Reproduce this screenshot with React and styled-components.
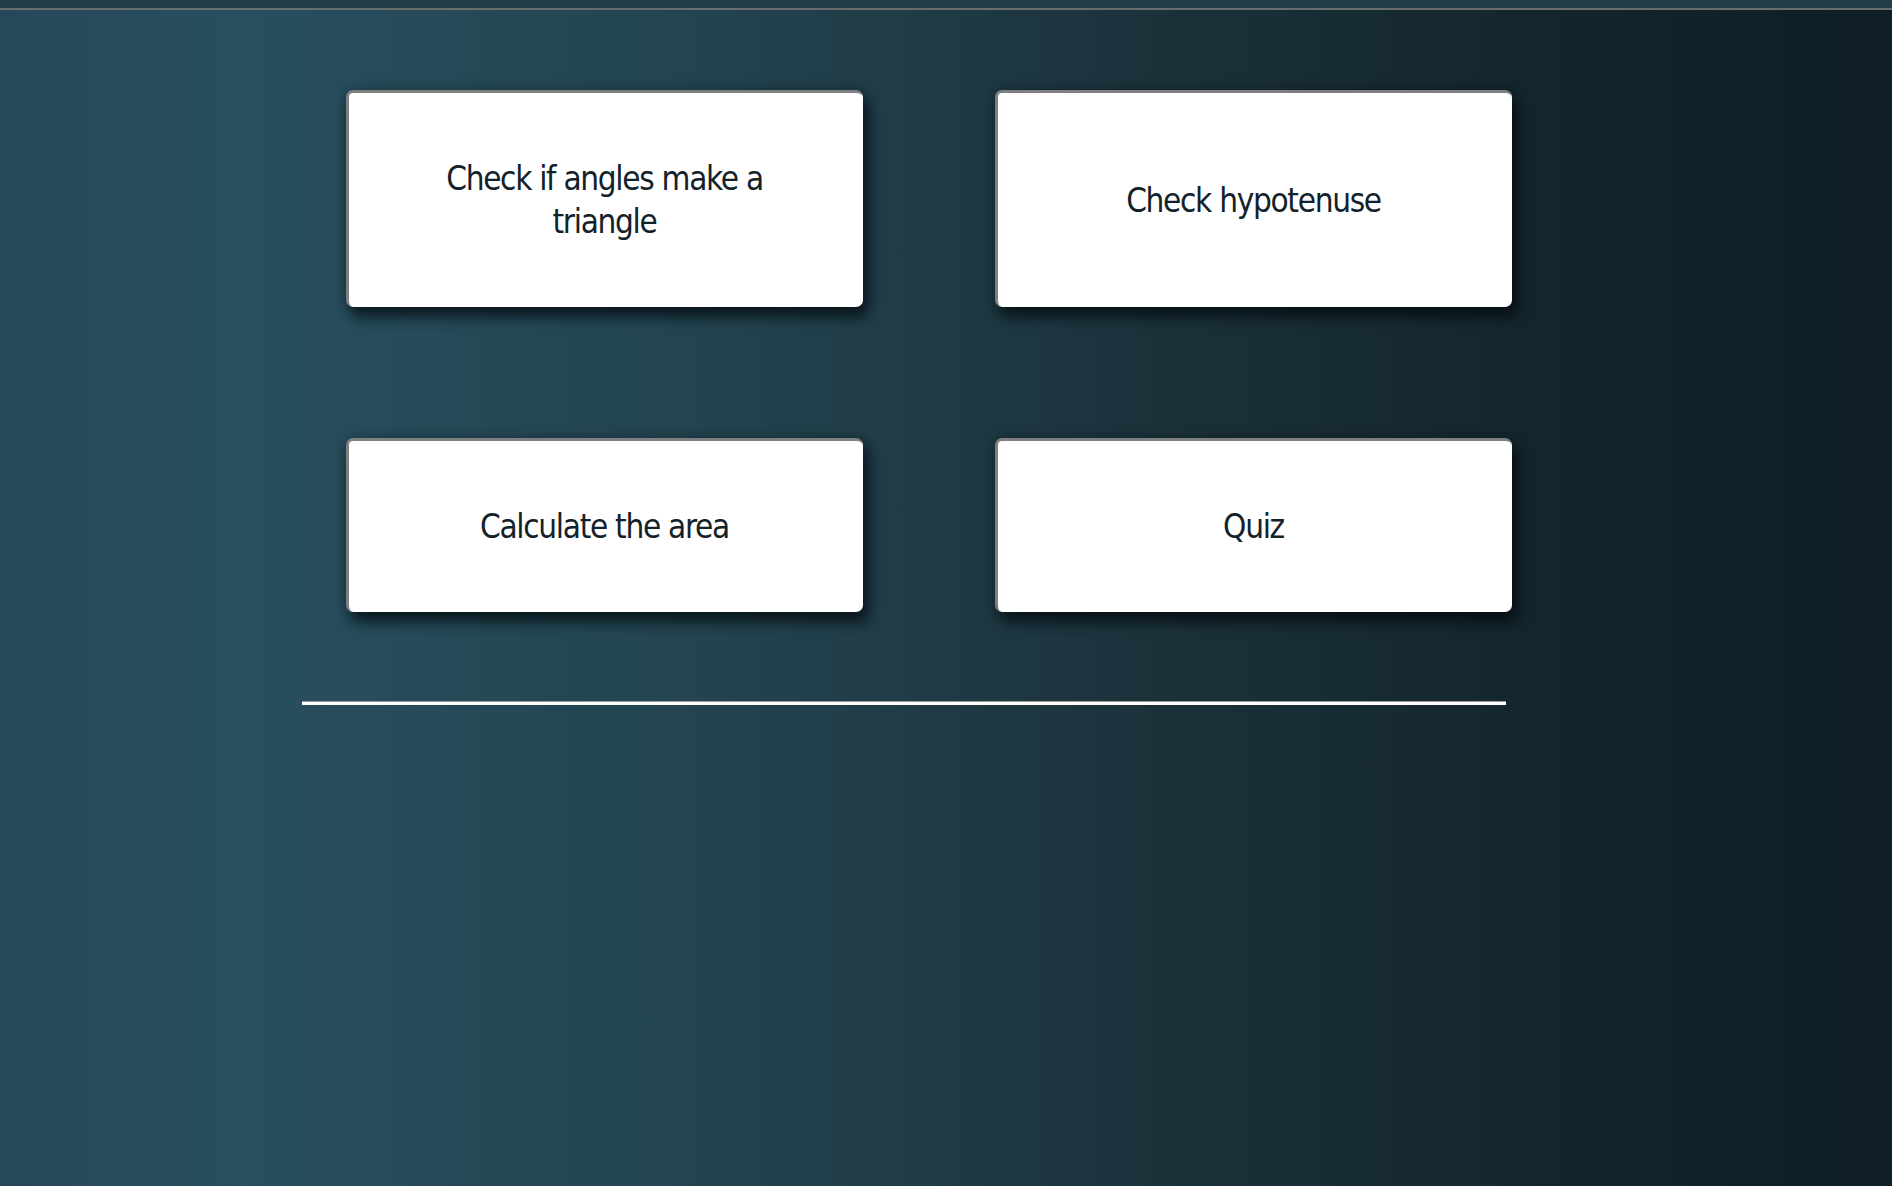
import React from "react";
import styled, { createGlobalStyle } from "styled-components";

const Global = createGlobalStyle`
  html, body { margin: 0; padding: 0; }
  body {
    font-family: "DejaVu Sans", sans-serif;
    background: #10202a;
  }
`;

const Page = styled.div`
  min-height: 100vh;
  background: linear-gradient(90deg, #26495a 0%, #284f5f 13%, #23434f 38%, #1b313a 62%, #13242b 84%, #0f1e25 100%);
`;

const TopBar = styled.div`
  height: 8px;
  background: #223d46;
  border-bottom: 2px solid #6a6d6e;
`;

const Main = styled.main`
  width: 1204px;
  margin-left: 302px;
  padding-top: 80px;
`;

const Grid = styled.div`
  display: grid;
  grid-template-columns: 517px 517px;
  column-gap: 132px;
  row-gap: 131px;
  margin-left: 44px;
  align-items: stretch;
`;

const Card = styled.button`
  box-sizing: border-box;
  padding: 64px 70px 64px 67px;
  background: #ffffff;
  border: none;
  border-top: 3px solid #7d7f80;
  border-left: 3px solid #7d7f80;
  border-radius: 7px;
  box-shadow: 5px 10px 14px rgba(3, 10, 14, 0.72), 0 0 14px rgba(3, 10, 14, 0.3);
  display: flex;
  align-items: center;
  justify-content: center;
  cursor: pointer;
`;

const Label = styled.span`
  max-width: 330px;
  font-family: "DejaVu Sans", sans-serif;
  font-stretch: condensed;
  font-size: 33px;
  line-height: 43px;
  letter-spacing: -1.3px;
  color: #13222a;
  text-align: center;
`;

const Rule = styled.hr`
  margin: 89px 0 0 0;
  height: 3px;
  border: none;
  border-top: 1px solid #9a9a9a;
  background: #ffffff;
`;

const items = [
  "Check if angles make a triangle",
  "Check hypotenuse",
  "Calculate the area",
  "Quiz",
];

export default function App() {
  return (
    <>
      <Global />
      <Page>
        <TopBar />
        <Main>
          <Grid>
            {items.map((t) => (
              <Card key={t}>
                <Label>{t}</Label>
              </Card>
            ))}
          </Grid>
          <Rule />
        </Main>
      </Page>
    </>
  );
}
